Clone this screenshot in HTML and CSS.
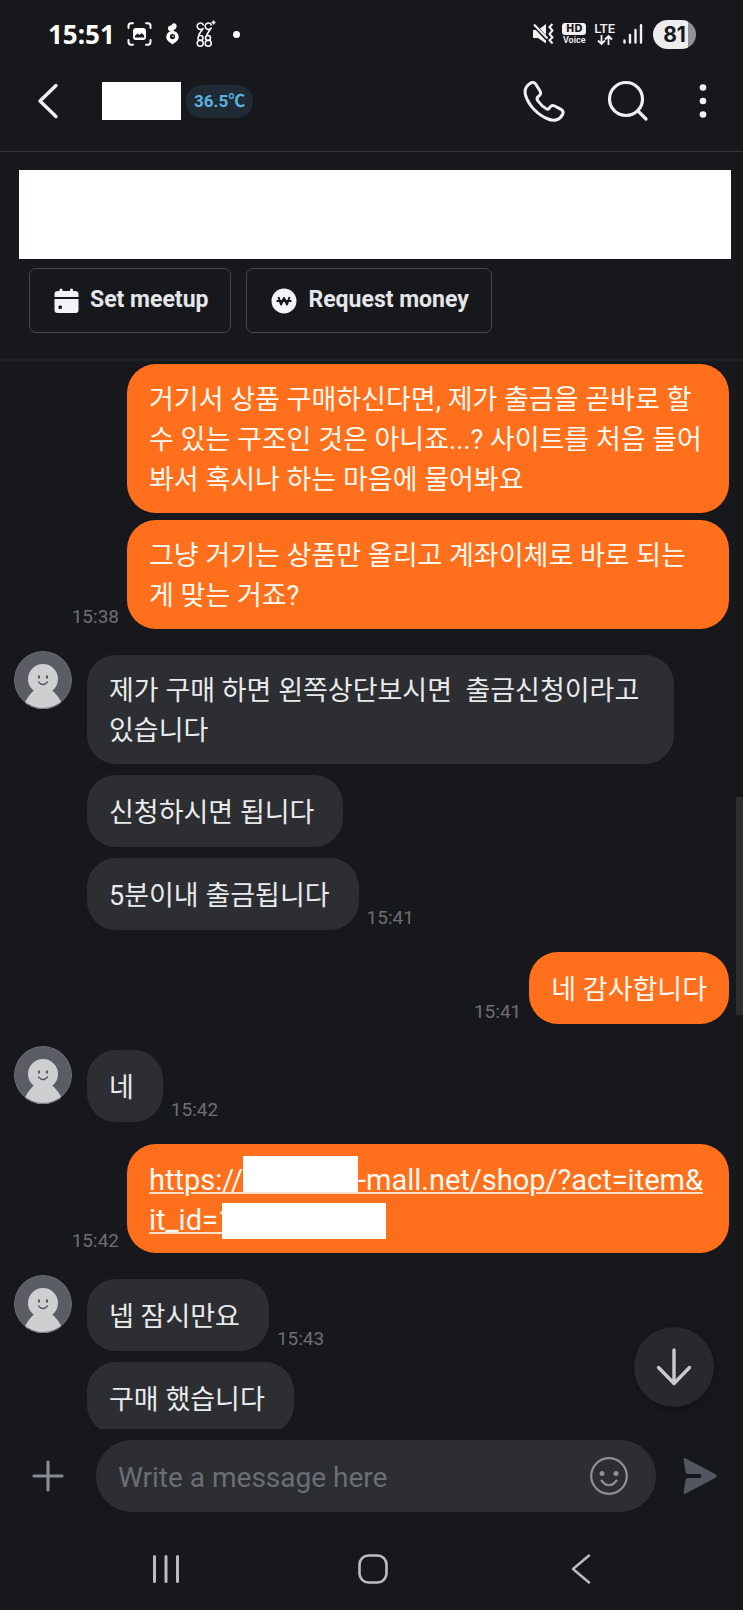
FILE: index.html
```html
<!DOCTYPE html>
<html lang="ko">
<head>
<meta charset="utf-8">
<meta name="viewport" content="width=device-width, initial-scale=1">
<title>Chat</title>
<link rel="stylesheet" href="styles.css">
</head>
<body>
<svg class="defs" aria-hidden="true">
  <symbol id="avatar" viewBox="0 0 58 58">
    <clipPath id="disc"><circle cx="29" cy="29" r="29"/></clipPath>
    <g clip-path="url(#disc)">
      <circle cx="29" cy="29" r="29" fill="#5b5d64"/>
      <circle cx="29" cy="28" r="15" fill="#cecfd1"/>
      <path d="M8 60C11 47 19 40 22 38H36C42 42 48 49 50 60Z" fill="#cecfd1"/>
      <circle cx="29" cy="29" r="28.5" fill="none" stroke="#6a6c73"/>
    </g>
    <ellipse cx="25" cy="26" rx="1.2" ry="1.8" fill="#55575d"/>
    <ellipse cx="33" cy="26" rx="1.2" ry="1.8" fill="#55575d"/>
    <path d="M24.500 31Q29 36 33.500 31" fill="none" stroke="#55575d" stroke-width="1.300" stroke-linecap="round"/>
  </symbol>
</svg>

<div class="status">
  <div class="status-group">
    <span class="clock">15:51</span>
    <svg width="25" height="24" viewBox="0 0 25 24" fill="none" stroke="#fff" stroke-width="2" stroke-linecap="round">
      <path d="M1.500 6V4Q1.500 1.300 4 1.300H6M19 1.300H21Q23.500 1.300 23.500 4V6M1.500 18V20Q1.500 22.700 4 22.700H6M19 22.700H21Q23.500 22.700 23.500 20V18"/>
      <rect x="6" y="6" width="13" height="12" rx="3" fill="#fff" stroke="none"/>
      <path d="M7.800 15.500V14L10.500 11.500L12.500 13L14.500 11L17.200 13.500V15.500Z" fill="#17181b" stroke="none"/>
    </svg>
    <svg class="carrot" width="13" height="22" viewBox="0 0 13 22">
      <path d="M2 6C1.500 3 4 2.500 5.500 2.500C6.500-1 11.500 0 10.500 4C10 6.500 8 6.500 7.500 7.500C5.500 9 2.500 8.500 2 6Z" fill="#fff"/>
      <path d="M6.500 8C10.300 8 12.700 10.700 12.700 14C12.700 17.500 9.500 19 6.500 21.500C3.500 19 .300 17.500 .300 14C.300 10.700 2.700 8 6.500 8Z" fill="#fff"/>
      <circle cx="6.500" cy="13.600" r="2.600" fill="#17181b"/><circle cx="7" cy="13.300" r=".8" fill="#fff"/>
    </svg>
    <svg class="nines" width="22" height="28" viewBox="0 0 22 28" fill="none" stroke="#fff" stroke-width="1.500">
      <path d="M8.500 5.500A3.200 3.200 0 1 0 7 9M8.500 8L3.500 15M16.500 5.500A3.200 3.200 0 1 0 15 9M16.500 7.500L11.500 15M18.500 .500V4.500M16.500 2.500H20.500"/>
      <circle cx="5.500" cy="18" r="2.500"/><circle cx="13" cy="18" r="2.500"/>
      <circle cx="5.200" cy="23.300" r="3"/><circle cx="13.200" cy="23.300" r="3"/>
    </svg>
    <span class="dot"></span>
  </div>
  <div class="status-group status-right">
    <svg width="22" height="22" viewBox="0 0 22 22">
      <path d="M1 7H6L14 1V20.500L6 15H1Z" fill="#f2f2f3"/>
      <path d="M1 1L15 16" stroke="#17181b" stroke-width="4"/>
      <path d="M2 1.500L15.500 15.500" stroke="#f2f2f3" stroke-width="2"/>
      <path d="M20.500 1L17.500 4L20.500 7.500L17.500 11L20.500 14.500L17.500 17L20.500 20.500" fill="none" stroke="#f2f2f3" stroke-width="2"/>
    </svg>
    <span class="hd"><b>HD</b><span>Voice</span></span>
    <span class="lte"><span>LTE</span>
      <svg width="16" height="10" viewBox="0 0 16 10" fill="none" stroke="#f2f2f3" stroke-width="1.800"><path d="M4.500 0V8.500M1 5.500L4.500 9L8 5.500M11.500 10V1.500M8 4.500L11.500 1L15 4.500"/></svg>
    </span>
    <svg class="signal" width="20" height="20" viewBox="0 0 20 20" fill="none" stroke="#f2f2f3" stroke-width="2.400" stroke-linecap="round"><path d="M1.500 16.500V18.500M7 11V18.500M12.500 6V18.500M18 1.200V18.500"/></svg>
    <span class="battery">81</span>
  </div>
</div>

<header class="header">
  <button class="icon-btn" aria-label="Back"><svg width="22" height="36" viewBox="0 0 22 36" fill="none" stroke="#eff0f3" stroke-width="3.400" stroke-linecap="round" stroke-linejoin="round"><path d="M19 2.500L3 18L19 33.500"/></svg></button>
  <span class="name-mask"></span>
  <span class="temp">36.5℃</span>
  <div class="header-actions">
    <button class="icon-btn" aria-label="Call"><svg width="42" height="42" viewBox="0 0 42 42" fill="none" stroke="#eff0f3" stroke-width="3" stroke-linecap="round" stroke-linejoin="round"><path d="M7 3.500C9 2 11.500 2.300 12.800 4.300L17 11C18 12.700 17.600 14.500 16.300 15.700L15.300 16.500C13.500 18 13.700 19.300 15 21C17.500 24.500 20 27 23.300 28.800C24.500 29.500 25.300 29.300 26 28.500L27 27.200C28.200 25.600 30 25.200 31.700 26L38 29.300C40 30.400 40.500 32.400 39.500 34.500C37 40 31 41.500 25 39C15 35 6 26 2.800 16C1.200 11 2.300 6.500 7 3.500Z"/></svg></button>
    <button class="icon-btn" aria-label="Search"><svg width="42" height="42" viewBox="0 0 42 42" fill="none" stroke="#eff0f3" stroke-width="3.200" stroke-linecap="round"><circle cx="19" cy="19" r="16.500"/><path d="M31 31L39 39"/></svg></button>
    <button class="icon-btn" aria-label="More"><svg width="8" height="36" viewBox="0 0 8 36" fill="#eff0f3"><circle cx="4" cy="4.500" r="3.300"/><circle cx="4" cy="18" r="3.300"/><circle cx="4" cy="31.500" r="3.300"/></svg></button>
  </div>
</header>

<section class="product">
  <div class="product-mask"></div>
  <div class="product-actions">
    <button class="action"><svg width="25" height="26" viewBox="0 0 25 26"><path d="M5.500 3V1.500Q7-.500 8.500 1.500V3H16V1.500Q17.500-.500 19 1.500V3H21Q24.500 3 24.500 6V9H.500V6Q.500 3 4 3ZM.500 11H24.500V22Q24.500 25 21.500 25H3.500Q.500 25 .500 22Z" fill="#f2f3f5"/><rect x="4.500" y="17.500" width="3.400" height="3.400" rx="1" fill="#17181b"/></svg><span>Set meetup</span></button>
    <button class="action"><svg width="26" height="26" viewBox="0 0 26 26"><circle cx="13" cy="13" r="12.500" fill="#f2f3f5"/><path d="M7.500 9L10 16.500L13 10L16 16.500L18.500 9M5.500 13H20.500" fill="none" stroke="#17181b" stroke-width="2" stroke-linejoin="round"/></svg><span>Request money</span></button>
  </div>
</section>

<main class="chat">
  <div class="messages">
    <div class="group mine">
      <div class="row"><p class="bubble">거기서 상품 구매하신다면, 제가 출금을 곧바로 할 수 있는 구조인 것은 아니죠...? 사이트를 처음 들어봐서 혹시나 하는 마음에 물어봐요</p></div>
      <div class="row"><p class="bubble">그냥 거기는 상품만 올리고 계좌이체로 바로 되는 게 맞는 거죠?</p><time>15:38</time></div>
    </div>
    <div class="group theirs">
      <svg class="avatar"><use href="#avatar"/></svg>
      <div class="stack">
        <div class="row"><p class="bubble">제가 구매 하면 왼쪽상단보시면&nbsp; 출금신청이라고 있습니다</p></div>
        <div class="row"><p class="bubble">신청하시면 됩니다</p></div>
        <div class="row"><p class="bubble">5분이내 출금됩니다</p><time>15:41</time></div>
      </div>
    </div>
    <div class="group mine">
      <div class="row"><p class="bubble">네 감사합니다</p><time>15:41</time></div>
    </div>
    <div class="group theirs">
      <svg class="avatar"><use href="#avatar"/></svg>
      <div class="stack">
        <div class="row"><p class="bubble">네</p><time>15:42</time></div>
      </div>
    </div>
    <div class="group mine">
      <div class="row"><p class="bubble bubble-link"><a class="link" href="#">https://<span class="mask mask-host"></span>-mall.net/shop/?act=item&amp;<br>it_id=1<span class="mask mask-id"></span></a></p><time>15:42</time></div>
    </div>
    <div class="group theirs">
      <svg class="avatar"><use href="#avatar"/></svg>
      <div class="stack">
        <div class="row"><p class="bubble">넵 잠시만요</p><time>15:43</time></div>
        <div class="row"><p class="bubble">구매 했습니다</p></div>
      </div>
    </div>
  </div>
  <div class="thumb"></div>
  <button class="to-bottom" aria-label="Scroll to latest"><svg width="36" height="38" viewBox="0 0 36 38" fill="none" stroke="#c9cacc" stroke-width="3.400" stroke-linecap="round" stroke-linejoin="round"><path d="M18 2V35.500M2.500 19.500L18 35.500L33.500 19.500"/></svg></button>
</main>

<form class="composer">
  <button type="button" class="icon-btn" aria-label="Add"><svg width="32" height="32" viewBox="0 0 32 32" stroke="#868b94" stroke-width="3.200" stroke-linecap="round"><path d="M16 2V30M2 16H30"/></svg></button>
  <div class="field">
    <input type="text" placeholder="Write a message here" aria-label="Message">
    <button type="button" class="icon-btn" aria-label="Emoji"><svg width="38" height="38" viewBox="0 0 38 38" fill="none" stroke="#8d9095" stroke-width="2.200" stroke-linecap="round"><circle cx="19" cy="19" r="17.800"/><path d="M11.500 23.500Q19 33 26.500 23.500"/><circle cx="12" cy="16.500" r="2.500" fill="#8d9095" stroke="none"/><circle cx="26" cy="16.500" r="2.500" fill="#8d9095" stroke="none"/></svg></button>
  </div>
  <button type="button" class="icon-btn" aria-label="Send"><svg width="34" height="38" viewBox="0 0 34 38"><path d="M.500 2.500Q.500 .500 2.500 1.300L32.500 17.300Q34.500 19 32.500 20.700L2.500 36.700Q.500 37.500 .500 35.500L2.500 23Q3 21 5 21H16.500Q18.500 21 18.500 19Q18.500 17 16.500 17H5Q3 17 2.500 15Z" fill="#52565e"/></svg></button>
</form>

<nav class="navbar">
  <button class="icon-btn" aria-label="Recents"><svg width="28" height="30" viewBox="0 0 28 30" stroke="#bdbdbe" stroke-width="3" stroke-linecap="round"><path d="M2.500 2.500V27.500M14 2.500V27.500M25.500 2.500V27.500"/></svg></button>
  <button class="icon-btn" aria-label="Home"><svg width="30" height="30" viewBox="0 0 30 30" fill="none" stroke="#bdbdbe" stroke-width="2.600"><rect x="1.500" y="1.500" width="27" height="27" rx="9"/></svg></button>
  <button class="icon-btn" aria-label="Back"><svg width="20" height="30" viewBox="0 0 20 30" fill="none" stroke="#bdbdbe" stroke-width="2.400" stroke-linecap="round" stroke-linejoin="round"><path d="M18 1.500L2 15L18 28.500"/></svg></button>
</nav>
</body>
</html>
```
FILE: styles.css
```css
* { box-sizing: border-box; }
html { background: #17181b; }
body {
  margin: 0;
  height: 100vh;
  display: flex;
  flex-direction: column;
  background: #17181b;
  color: #e9eaec;
  font-family: Roboto, "Noto Sans CJK KR", sans-serif;
  overflow: hidden;
}
button, input { font: inherit; color: inherit; }
button { cursor: pointer; }
svg { display: block; flex: none; }
.defs { position: absolute; width: 0; height: 0; }
.icon-btn { display: block; padding: 0; border: 0; background: none; }

/* status bar */
.status {
  flex: none;
  display: flex;
  justify-content: space-between;
  align-items: center;
  height: 51px;
  padding: 17px 47px 0 48px;
  color: #fff;
}
.status-group { display: flex; align-items: center; gap: 12px; }
.clock { font: 700 26px/32px "Noto Sans", Roboto, sans-serif; }
.carrot { margin-left: 2px; }
.nines { margin-left: 4px; }
.dot { width: 7px; height: 7px; margin-left: 4px; border-radius: 50%; background: #fff; }
.status-right { gap: 8px; color: #f2f2f3; }
.hd { display: flex; flex-direction: column; align-items: center; width: 24px; font-size: 9px; line-height: 10px; font-weight: 600; }
.hd b { width: 24px; border-radius: 3px; background: #f2f2f3; color: #17181b; font: 700 10px/12px "DejaVu Sans", sans-serif; text-align: center; }
.lte { display: flex; flex-direction: column; align-items: center; gap: 1px; font-size: 13px; line-height: 11px; font-weight: 500; }
.signal { margin-right: 2px; }
.battery {
  width: 43px;
  border-radius: 15px;
  background: linear-gradient(90deg, #ededee 81%, #929294 81%);
  color: #17181b;
  font: 700 21px/29px Inter, sans-serif;
  text-align: center;
}

/* header */
.header {
  flex: none;
  display: flex;
  align-items: center;
  height: 101px;
  padding: 0 36px 0 37px;
  border-bottom: 1px solid #36373a;
}
.name-mask { width: 79px; height: 38px; margin-left: 43px; background: #fff; }
.temp {
  margin-left: 5px;
  padding: 0 8px;
  border-radius: 16px;
  background: #1f2a35;
  color: #5bb2df;
  font-size: 17px;
  line-height: 33px;
  font-weight: 700;
}
.header-actions { display: flex; align-items: center; gap: 42px; margin-left: auto; }
.header-actions .icon-btn:last-child { margin-left: 8px; }

/* product */
.product { flex: none; padding: 18px 12px 26px 19px; border-bottom: 2px solid #212225; }
.product-mask { height: 89px; background: #fff; }
.product-actions { display: flex; gap: 15px; margin: 9px 0 0 10px; }
.action {
  display: flex;
  align-items: center;
  gap: 11px;
  height: 65px;
  padding: 0 22px 0 24px;
  border: 1px solid #45474b;
  border-radius: 7px;
  background: none;
  color: #e6e7ea;
  font-size: 23px;
  line-height: 28px;
  font-weight: 700;
}
.action span { padding-bottom: 2px; }

/* chat */
.chat { position: relative; flex: 1; min-height: 0; }
.messages {
  display: flex;
  flex-direction: column;
  gap: 22px;
  height: 100%;
  padding: 3px 14px 0;
  overflow-y: auto;
  scrollbar-width: none;
}
.group { flex: none; display: flex; }
.row { display: flex; align-items: flex-end; gap: 8px; }
.mine { flex-direction: column; gap: 7px; }
.mine .row { flex-direction: row-reverse; }
.theirs { gap: 15px; }
.avatar { width: 58px; height: 58px; }
.stack { display: flex; flex-direction: column; flex: 1; min-width: 0; gap: 11px; padding-top: 4px; }
.bubble {
  display: flex;
  flex-direction: column;
  justify-content: center;
  min-height: 72px;
  max-width: 602px;
  margin: 0;
  padding: 16px 22px 13px;
  border-radius: 29px;
  background: #2c2e32;
  font-size: 27px;
  line-height: 40px;
}
.theirs .bubble { max-width: 587px; padding-right: 29px; }
.mine .bubble { background: #ff6f1c; color: #fffaf2; }
.mine .bubble-link { width: 100%; font-size: 29px; }
time { color: #6d6f74; font-size: 19px; line-height: 24px; }
.link { color: inherit; text-decoration: underline; text-decoration-color: #ffe0c4; text-decoration-thickness: 2px; text-underline-offset: 2px; }
.mask { display: inline-block; height: 36px; margin-top: -10px; background: #fff; }
.mask-host { width: 115px; height: 38px; border-bottom: 2px solid #ffe0c4; vertical-align: -4px; }
.mask-id { width: 164px; margin-left: -12px; vertical-align: -9px; }
.thumb { position: absolute; right: 0; top: 436px; width: 7px; height: 218px; background: #2c2d30; }
.to-bottom {
  position: absolute;
  right: 29px;
  bottom: 22px;
  display: grid;
  place-items: center;
  width: 80px;
  height: 80px;
  border: 0;
  border-radius: 50%;
  background: #27292c;
  box-shadow: 0 2px 5px #111214;
}

/* composer */
.composer { flex: none; display: flex; align-items: center; padding: 11px 26px 0 32px; }
.field {
  flex: 1;
  min-width: 0;
  display: flex;
  align-items: center;
  height: 72px;
  margin: 0 27px 0 32px;
  padding: 0 28px 0 22px;
  border-radius: 36px;
  background: #2c2e32;
}
.field input { flex: 1; min-width: 0; padding: 2px 0 0; border: 0; outline: 0; background: none; font-size: 28px; }
.field input::placeholder { color: #6b6e75; opacity: 1; }

/* system navigation */
.navbar {
  flex: none;
  display: grid;
  grid-template-columns: repeat(3, 1fr);
  place-items: center;
  height: 98px;
  padding: 16px 58px 0 62px;
}
```
